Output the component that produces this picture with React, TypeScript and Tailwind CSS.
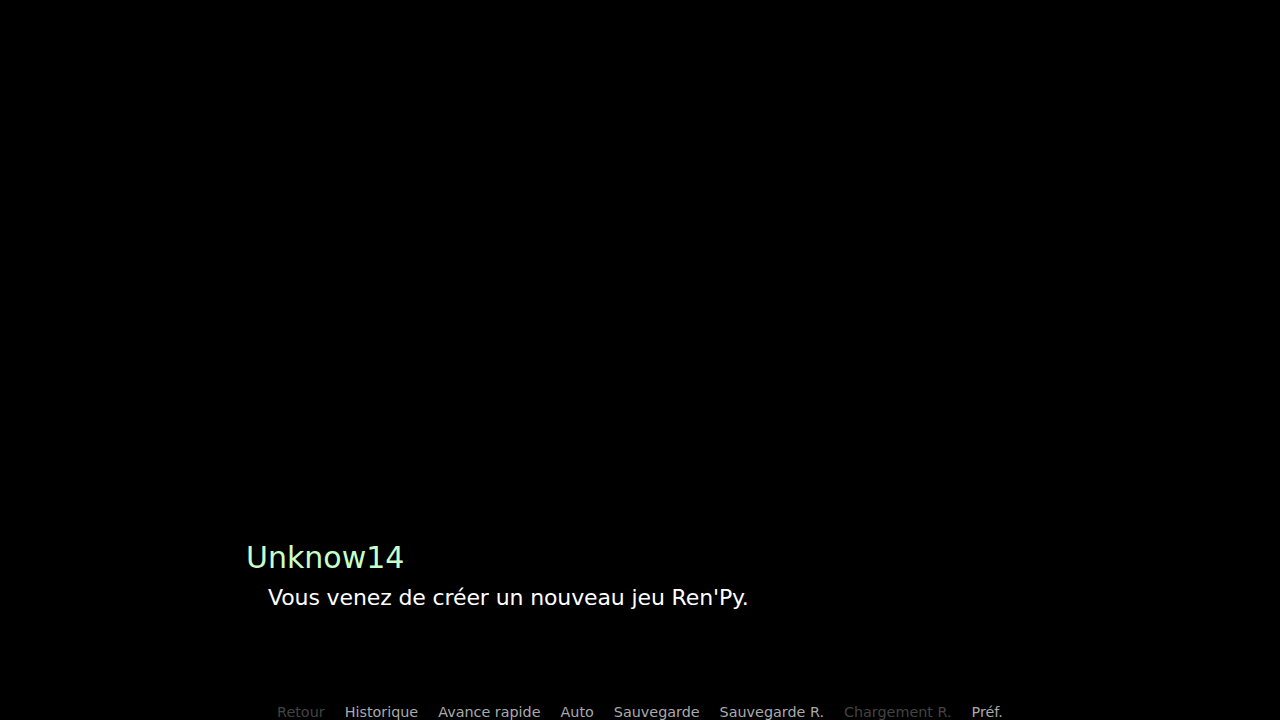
import React from "react";

const quickMenu: { label: string; disabled?: boolean }[] = [
  { label: "Retour", disabled: true },
  { label: "Historique" },
  { label: "Avance rapide" },
  { label: "Auto" },
  { label: "Sauvegarde" },
  { label: "Sauvegarde R." },
  { label: "Chargement R.", disabled: true },
  { label: "Préf." },
];

export default function App() {
  return (
    <div
      className="flex h-[720px] w-full flex-col justify-end overflow-hidden bg-black"
      style={{ fontFamily: '"DejaVu Sans", sans-serif' }}
    >
      {/* textbox */}
      <div className="flex flex-col">
        <div className="pl-[246px] text-[30px] leading-[30px] text-[#c8ffc8]">
          Unknow14
        </div>
        <div className="mt-[14px] pl-[268px] text-[22px] leading-[22px] tracking-[-0.12px] text-white">
          Vous venez de créer un nouveau jeu Ren'Py.
        </div>
      </div>

      {/* quick menu */}
      <div className="mt-[96px] flex justify-center gap-5 pb-[1px] text-[14.35px] leading-[14px]">
        {quickMenu.map((item) => (
          <button
            key={item.label}
            className={item.disabled ? "text-[#444444]" : "text-[#aaaaaa]"}
          >
            {item.label}
          </button>
        ))}
      </div>
    </div>
  );
}
